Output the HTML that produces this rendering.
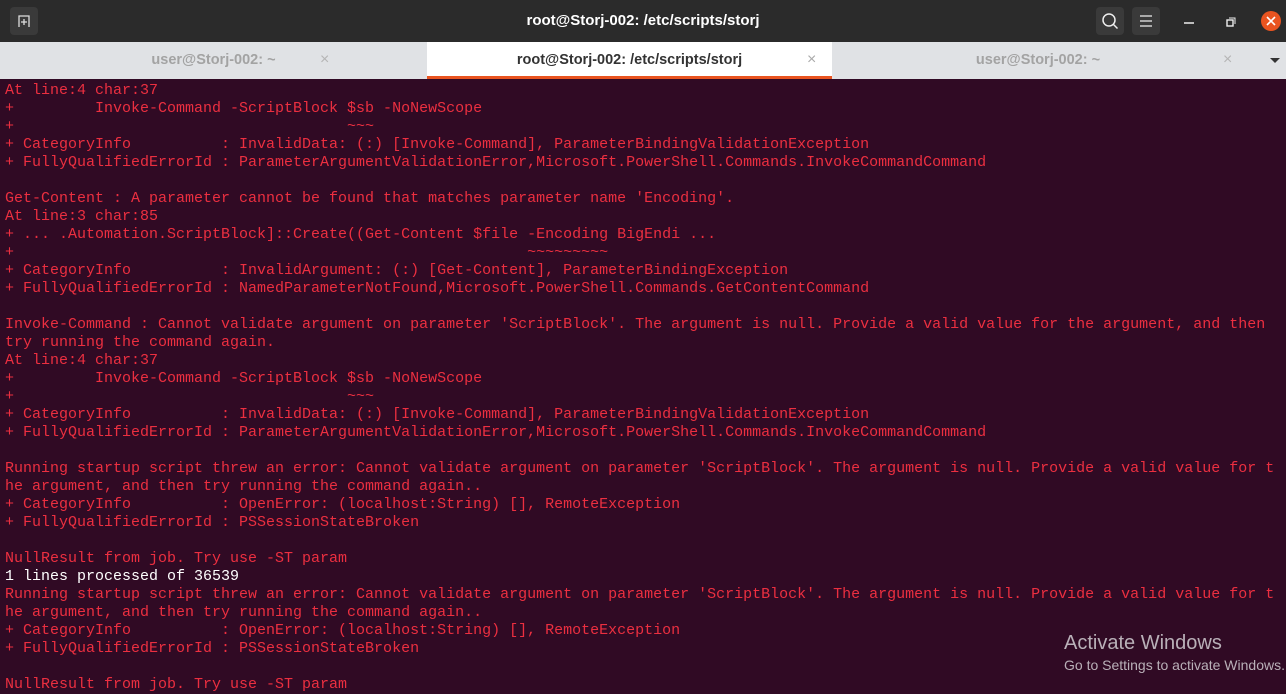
<!DOCTYPE html><html><head><style>
body{margin:0;width:1286px;height:689px;overflow:hidden;background:#300a24;font-family:"Liberation Sans",sans-serif}
.hb{position:absolute;left:0;top:0;width:1286px;height:42px;background:#2b2b2b}
.btn{position:absolute;top:7px;width:28px;height:28px;background:#3a3a3a;border-radius:4px}
.title{position:absolute;top:0;left:0;width:1286px;text-align:center;line-height:42px;color:#fff;font-weight:bold;font-size:15px}
.tabs{position:absolute;top:42px;left:0;width:1286px;height:37px;background:#e0e2e5}
.tab{position:absolute;top:0;height:37px;line-height:36px;text-align:center;font-size:14.5px;font-weight:bold;color:#a3a3a3}
.x{position:absolute;top:0;font-size:16px;color:#b5b5b5;line-height:36px}
pre{position:absolute;left:5px;top:82px;margin:0;font-family:"Liberation Mono",monospace;font-size:15px;line-height:18px;color:#ec2f40}
.w{color:#fff}
.aw{position:absolute;left:1064px;top:632px;color:#b9b0b8;font-size:20px}
.aw2{position:absolute;left:1064px;top:657px;color:#b9b0b8;font-size:14px;white-space:nowrap}
</style></head><body>
<div class="hb">
<div class="btn" style="left:10px"><svg width="28" height="28"><path d="M9 20V9h10v11M14 12v6M11 15h6" stroke="#ddd" stroke-width="1.3" fill="none"/></svg></div>
<div class="title">root@Storj-002: /etc/scripts/storj</div>
<div class="btn" style="left:1096px"><svg width="28" height="28"><circle cx="13" cy="13" r="6" stroke="#eee" stroke-width="1.5" fill="none"/><path d="M17.5 17.5l4 4" stroke="#eee" stroke-width="1.5"/></svg></div>
<div class="btn" style="left:1132px"><svg width="28" height="28"><path d="M8 9h12M8 14h12M8 19h12" stroke="#eee" stroke-width="1.3"/></svg></div>
<svg style="position:absolute;left:1180px;top:12px" width="20" height="20"><path d="M4 11h10" stroke="#eee" stroke-width="1.5"/></svg>
<svg style="position:absolute;left:1220px;top:12px" width="20" height="20"><rect x="7" y="8" width="6" height="6" stroke="#eee" stroke-width="1.4" fill="none"/><path d="M9 6h6v6" stroke="#eee" fill="none"/></svg>
<div style="position:absolute;left:1261px;top:11px;width:20px;height:20px;border-radius:50%;background:#e95420"><svg width="20" height="20"><path d="M6 6l8 8M14 6l-8 8" stroke="#fff" stroke-width="1.6"/></svg></div>
</div>
<div class="tabs">
<div class="tab" style="left:0;width:427px">user@Storj-002: ~</div><div class="x" style="left:320px">×</div>
<div class="tab" style="left:427px;width:405px;background:#fff;color:#333">root@Storj-002: /etc/scripts/storj<div style="position:absolute;left:0;bottom:0;width:405px;height:3px;background:#e95420"></div></div><div class="x" style="left:807px;color:#aaa">×</div>
<div class="tab" style="left:832px;width:412px">user@Storj-002: ~</div><div class="x" style="left:1223px">×</div>
<div style="position:absolute;left:1270px;top:16px;border:5px solid transparent;border-top:5px solid #333"></div>
</div>
<pre>At line:4 char:37
+         Invoke-Command -ScriptBlock $sb -NoNewScope
+                                     ~~~
+ CategoryInfo          : InvalidData: (:) [Invoke-Command], ParameterBindingValidationException
+ FullyQualifiedErrorId : ParameterArgumentValidationError,Microsoft.PowerShell.Commands.InvokeCommandCommand

Get-Content : A parameter cannot be found that matches parameter name 'Encoding'.
At line:3 char:85
+ ... .Automation.ScriptBlock]::Create((Get-Content $file -Encoding BigEndi ...
+                                                         ~~~~~~~~~
+ CategoryInfo          : InvalidArgument: (:) [Get-Content], ParameterBindingException
+ FullyQualifiedErrorId : NamedParameterNotFound,Microsoft.PowerShell.Commands.GetContentCommand

Invoke-Command : Cannot validate argument on parameter 'ScriptBlock'. The argument is null. Provide a valid value for the argument, and then
try running the command again.
At line:4 char:37
+         Invoke-Command -ScriptBlock $sb -NoNewScope
+                                     ~~~
+ CategoryInfo          : InvalidData: (:) [Invoke-Command], ParameterBindingValidationException
+ FullyQualifiedErrorId : ParameterArgumentValidationError,Microsoft.PowerShell.Commands.InvokeCommandCommand

Running startup script threw an error: Cannot validate argument on parameter 'ScriptBlock'. The argument is null. Provide a valid value for t
he argument, and then try running the command again..
+ CategoryInfo          : OpenError: (localhost:String) [], RemoteException
+ FullyQualifiedErrorId : PSSessionStateBroken

NullResult from job. Try use -ST param
<span class="w">1 lines processed of 36539</span>
Running startup script threw an error: Cannot validate argument on parameter 'ScriptBlock'. The argument is null. Provide a valid value for t
he argument, and then try running the command again..
+ CategoryInfo          : OpenError: (localhost:String) [], RemoteException
+ FullyQualifiedErrorId : PSSessionStateBroken

NullResult from job. Try use -ST param</pre>
<div class="aw">Activate Windows</div>
<div class="aw2">Go to Settings to activate Windows.</div>
</body></html>
